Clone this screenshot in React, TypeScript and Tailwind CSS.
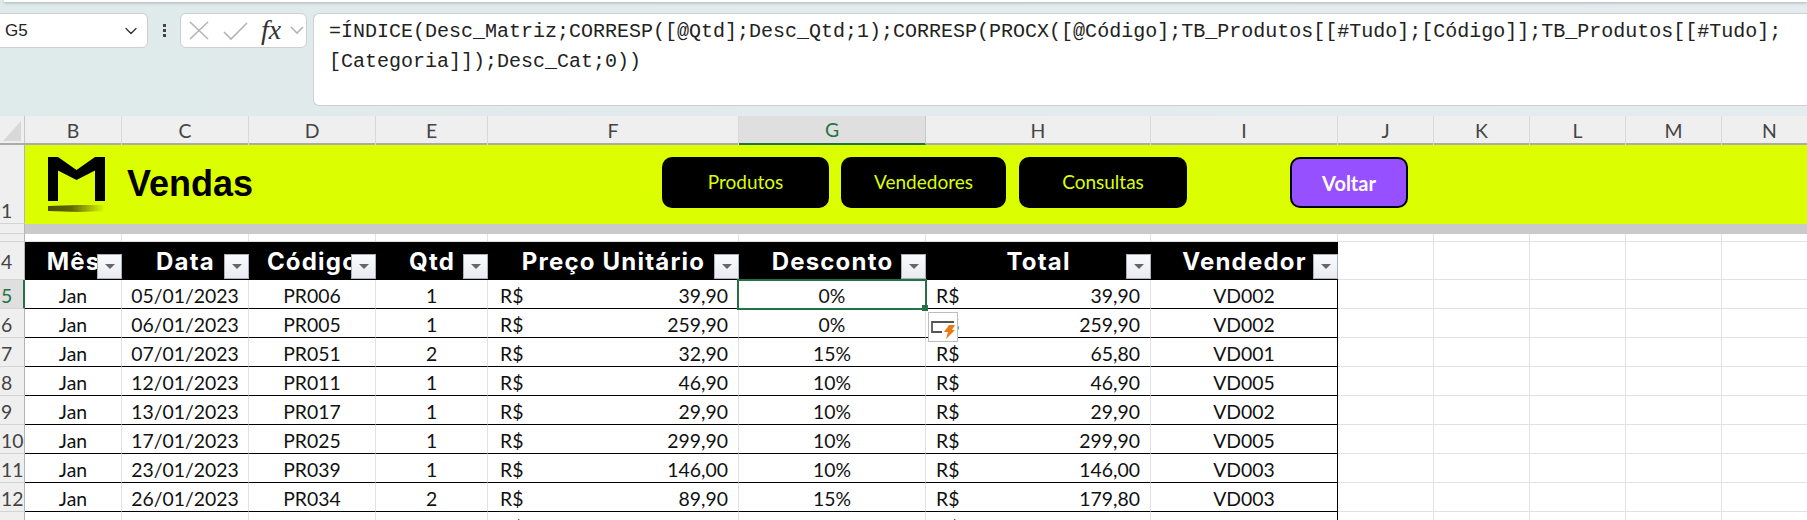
import { ChevronDown } from "lucide-react";

const colWidths = [97, 127, 127, 112, 251, 187, 225, 187, 96, 96, 96, 96, 96];
const colNames = ["B", "C", "D", "E", "F", "G", "H", "I", "J", "K", "L", "M", "N"];

const headers = [
  { label: "Mês", width: 97 },
  { label: "Data", width: 127 },
  { label: "Código", width: 127 },
  { label: "Qtd", width: 112 },
  { label: "Preço Unitário", width: 251 },
  { label: "Desconto", width: 187 },
  { label: "Total", width: 225 },
  { label: "Vendedor", width: 187 },
];

const rows = [
  { n: 5, data: "05/01/2023", cod: "PR006", qtd: "1", preco: "39,90", desc: "0%", total: "39,90", vend: "VD002" },
  { n: 6, data: "06/01/2023", cod: "PR005", qtd: "1", preco: "259,90", desc: "0%", total: "259,90", vend: "VD002" },
  { n: 7, data: "07/01/2023", cod: "PR051", qtd: "2", preco: "32,90", desc: "15%", total: "65,80", vend: "VD001" },
  { n: 8, data: "12/01/2023", cod: "PR011", qtd: "1", preco: "46,90", desc: "10%", total: "46,90", vend: "VD005" },
  { n: 9, data: "13/01/2023", cod: "PR017", qtd: "1", preco: "29,90", desc: "10%", total: "29,90", vend: "VD002" },
  { n: 10, data: "17/01/2023", cod: "PR025", qtd: "1", preco: "299,90", desc: "10%", total: "299,90", vend: "VD005" },
  { n: 11, data: "23/01/2023", cod: "PR039", qtd: "1", preco: "146,00", desc: "10%", total: "146,00", vend: "VD003" },
  { n: 12, data: "26/01/2023", cod: "PR034", qtd: "2", preco: "89,90", desc: "15%", total: "179,80", vend: "VD003" },
  { n: 13, data: "27/01/2023", cod: "PR020", qtd: "1", preco: "59,90", desc: "10%", total: "59,90", vend: "VD004" },
];

function RowHeader({ label, active, center }: { label?: number; active?: boolean; center?: boolean }) {
  return (
    <div
      className={`w-[25px] shrink-0 overflow-hidden border-b border-r border-b-[#d4d4d4] text-[19.4px] leading-none whitespace-nowrap flex pl-[1px] ${
        center ? "items-center pt-[3px]" : "items-end pb-[3px]"
      } ${active ? "bg-[#dfdfdf] text-[#217346] border-r-2 border-r-[#217346]" : "bg-[#efefef] text-[#444] border-r-[#b4b4b4]"}`}
    >
      {label}
    </div>
  );
}

function EmptyCells({ from }: { from: number }) {
  return (
    <>
      {colWidths.slice(from).map((w, i) => (
        <div key={i} className="shrink-0 border-r border-b border-[#e2e2e2]" style={{ width: w }} />
      ))}
    </>
  );
}

function FilterButton() {
  return (
    <div className="absolute right-0 bottom-[1px] w-[25px] h-[25px] flex items-center justify-center bg-gradient-to-b from-[#fafbfd] to-[#e9ebf0] border border-[#aab0ba]">
      <div className="w-0 h-0 border-l-[5px] border-r-[5px] border-t-[5px] border-l-transparent border-r-transparent border-t-[#666]" />
    </div>
  );
}

function Logo() {
  return (
    <svg width="57" height="55" viewBox="0 0 57 55" className="shrink-0">
      <defs>
        <linearGradient id="swash" x1="0" x2="1" y1="0" y2="0">
          <stop offset="0" stopColor="#4a4f00" />
          <stop offset="0.4" stopColor="#5f6500" />
          <stop offset="1" stopColor="#dcff00" />
        </linearGradient>
      </defs>
      <path d="M0 0 L10 0 L28.5 13 L47 0 L57 0 L57 44 L47 44 L47 13.5 L28.5 23 L10 13.5 L10 44 L0 44 Z" fill="#000" />
      <path d="M0 49 L30 48 L57 48 L57 54 L30 55 L0 54 Z" fill="url(#swash)" />
    </svg>
  );
}

function NavButton({ label, className }: { label: string; className: string }) {
  return (
    <div className={`h-[51px] shrink-0 rounded-[10px] bg-black text-[#dcff00] text-[19px] flex items-center justify-center ${className}`}>
      {label}
    </div>
  );
}

function SmartTag() {
  return (
    <div className="absolute left-[2px] top-[32px] z-10 w-[30px] h-[30px] bg-white border border-[#bcbcbc]">
      <svg width="28" height="28" viewBox="0 0 28 28" fill="none">
        <path d="M25 9 H3 V19 H13" stroke="#555" strokeWidth="1.8" />
        <path d="M20 12 L26 12 L23 17 L26 17 L17 26 L19 19 L15 19 Z" fill="#e97a14" />
      </svg>
    </div>
  );
}

function FormulaBar() {
  return (
    <div className="h-[116px] shrink-0 bg-gradient-to-r from-[#dfeaeb] to-[#e5ecef] relative flex items-start pt-[13px]">
      <div className="absolute top-0 left-[4px] right-0 h-[2px] bg-white shadow-[0_1px_3px_rgba(0,0,0,0.3)]" />
      <div className="w-[154px] h-[35px] shrink-0 -ml-[6px] pl-[10px] pr-[6px] rounded-[6px] bg-white border border-[#cfcfcf] flex items-center justify-between text-[17px] text-[#222] font-['Liberation_Sans',sans-serif]">
        G5
        <ChevronDown size={20} strokeWidth={1.6} className="text-[#333]" />
      </div>
      <div className="w-[32px] h-[35px] shrink-0 flex flex-col items-center justify-center gap-[2px]">
        <span className="w-[3px] h-[3px] bg-[#444]" />
        <span className="w-[3px] h-[3px] bg-[#444]" />
        <span className="w-[3px] h-[3px] bg-[#444]" />
      </div>
      <div className="w-[127px] h-[35px] shrink-0 rounded-[6px] bg-white border border-[#cfcfcf] flex items-center relative">
        <svg width="125" height="33" viewBox="0 0 125 33" fill="none" stroke="#b4b4b4" strokeWidth="1.6">
          <path d="M9 8 L27 25 M27 8 L9 25" />
          <path d="M43 18 L50 25 L66 9" />
          <path d="M110 13 L116 19 L122 13" />
        </svg>
        <span className="absolute left-[80px] top-[-5px] text-[28px] italic text-[#333] font-['Liberation_Serif',serif]">fx</span>
      </div>
      <div className="ml-[6px] flex-1 h-[93px] rounded-l-[6px] bg-white border border-r-0 border-[#cfcfcf] pl-[15px] pt-[3px] text-[20px] leading-[30px] text-[#222] font-['Liberation_Mono',monospace] whitespace-nowrap">
        =ÍNDICE(Desc_Matriz;CORRESP([@Qtd];Desc_Qtd;1);CORRESP(PROCX([@Código];TB_Produtos[[#Tudo];[Código]];TB_Produtos[[#Tudo];
        <br />
        [Categoria]]);Desc_Cat;0))
      </div>
    </div>
  );
}

export default function App() {
  const cell = "shrink-0 flex items-end justify-center pb-[3px] border-r border-b border-b-black";
  const money = "shrink-0 flex items-end justify-between pb-[3px] pr-[10px] border-r border-b border-r-[#e2e2e2] border-b-black";

  return (
    <div className="w-[1807px] h-[520px] overflow-hidden flex flex-col bg-white font-['Lato',sans-serif]">
      <FormulaBar />

      {/* Column letters */}
      <div className="flex h-[29px] shrink-0 bg-[#efefef] border-b-2 border-[#ababab]">
        <div className="w-[25px] shrink-0 relative border-r border-[#c8c8c8]">
          <div className="absolute right-[3px] bottom-[2px] w-0 h-0 border-l-[18px] border-b-[20px] border-l-transparent border-b-[#d8d8d8]" />
        </div>
        {colNames.map((c, i) => (
          <div
            key={c}
            className={`shrink-0 -mb-[2px] flex items-center justify-center text-[19.4px] border-r ${
              c === "G"
                ? "bg-[#dfdfdf] text-[#217346] border-r-[#c8c8c8] border-b-2 border-b-[#217346]"
                : "text-[#444] border-r-[#d8d8d8]"
            }`}
            style={{ width: colWidths[i] }}
          >
            {c}
          </div>
        ))}
      </div>

      {/* Row 1: banner */}
      <div className="flex h-[79px] shrink-0">
        <RowHeader label={1} />
        <div className="flex-1 bg-[#dcff00] flex items-start pl-[23px] pt-[12px]">
          <Logo />
          <div className="w-[130px] ml-[22px] mt-[2px] text-[36px] leading-[50px] font-bold text-black font-['Liberation_Sans',sans-serif]">Vendas</div>
          <NavButton label="Produtos" className="w-[167px] ml-[405px]" />
          <NavButton label="Vendedores" className="w-[165px] ml-[12px]" />
          <NavButton label="Consultas" className="w-[168px] ml-[13px]" />
          <div className="w-[118px] h-[51px] ml-[103px] shrink-0 rounded-[10px] bg-[#9650ff] border-2 border-black text-white text-[20px] font-bold flex items-center justify-center">
            Voltar
          </div>
        </div>
      </div>

      {/* Row 2: grey divider */}
      <div className="flex h-[10px] shrink-0">
        <RowHeader />
        <div className="flex-1 bg-[#cacaca]" />
      </div>

      {/* Row 3 */}
      <div className="flex h-[8px] shrink-0">
        <RowHeader />
        <EmptyCells from={0} />
      </div>

      {/* Row 4: table header */}
      <div className="flex h-[38px] shrink-0">
        <RowHeader label={4} center />
        {headers.map((h) => (
          <div
            key={h.label}
            className="relative shrink-0 overflow-hidden bg-black text-white text-[24px] font-bold tracking-[1.2px] font-['Inter',sans-serif] flex items-center justify-center pt-[1px] whitespace-nowrap"
            style={{ width: h.width }}
          >
            {h.label}
            <FilterButton />
          </div>
        ))}
        <EmptyCells from={8} />
      </div>

      {/* Rows 5 to 13 */}
      {rows.map((r) => (
        <div key={r.n} className="flex h-[29px] shrink-0 text-[19.4px] leading-none text-[#111]">
          <RowHeader label={r.n} active={r.n === 5} />
          <div className={`${cell} border-r-[#e2e2e2]`} style={{ width: 97 }}>Jan</div>
          <div className={`${cell} border-r-[#e2e2e2]`} style={{ width: 127 }}>{r.data}</div>
          <div className={`${cell} border-r-[#e2e2e2]`} style={{ width: 127 }}>{r.cod}</div>
          <div className={`${cell} border-r-[#e2e2e2]`} style={{ width: 112 }}>{r.qtd}</div>
          <div className={`${money} pl-[12px]`} style={{ width: 251 }}>
            <span>R$</span>
            <span>{r.preco}</span>
          </div>
          <div className={`${cell} border-r-[#e2e2e2] relative`} style={{ width: 187 }}>
            {r.desc}
            {r.n === 5 && (
              <>
                <div className="absolute -left-[2px] -top-[1px] w-[190px] h-[31px] border-[2.5px] border-[#217346] z-10" />
                <div className="absolute -right-[3px] -bottom-[3px] w-[6px] h-[6px] bg-[#217346] z-20" />
              </>
            )}
          </div>
          <div className={`${money} relative pl-[10px]`} style={{ width: 225 }}>
            <span>R$</span>
            <span>{r.total}</span>
            {r.n === 5 && <SmartTag />}
          </div>
          <div className={`${cell} border-r-black`} style={{ width: 187 }}>{r.vend}</div>
          <EmptyCells from={8} />
        </div>
      ))}
    </div>
  );
}
